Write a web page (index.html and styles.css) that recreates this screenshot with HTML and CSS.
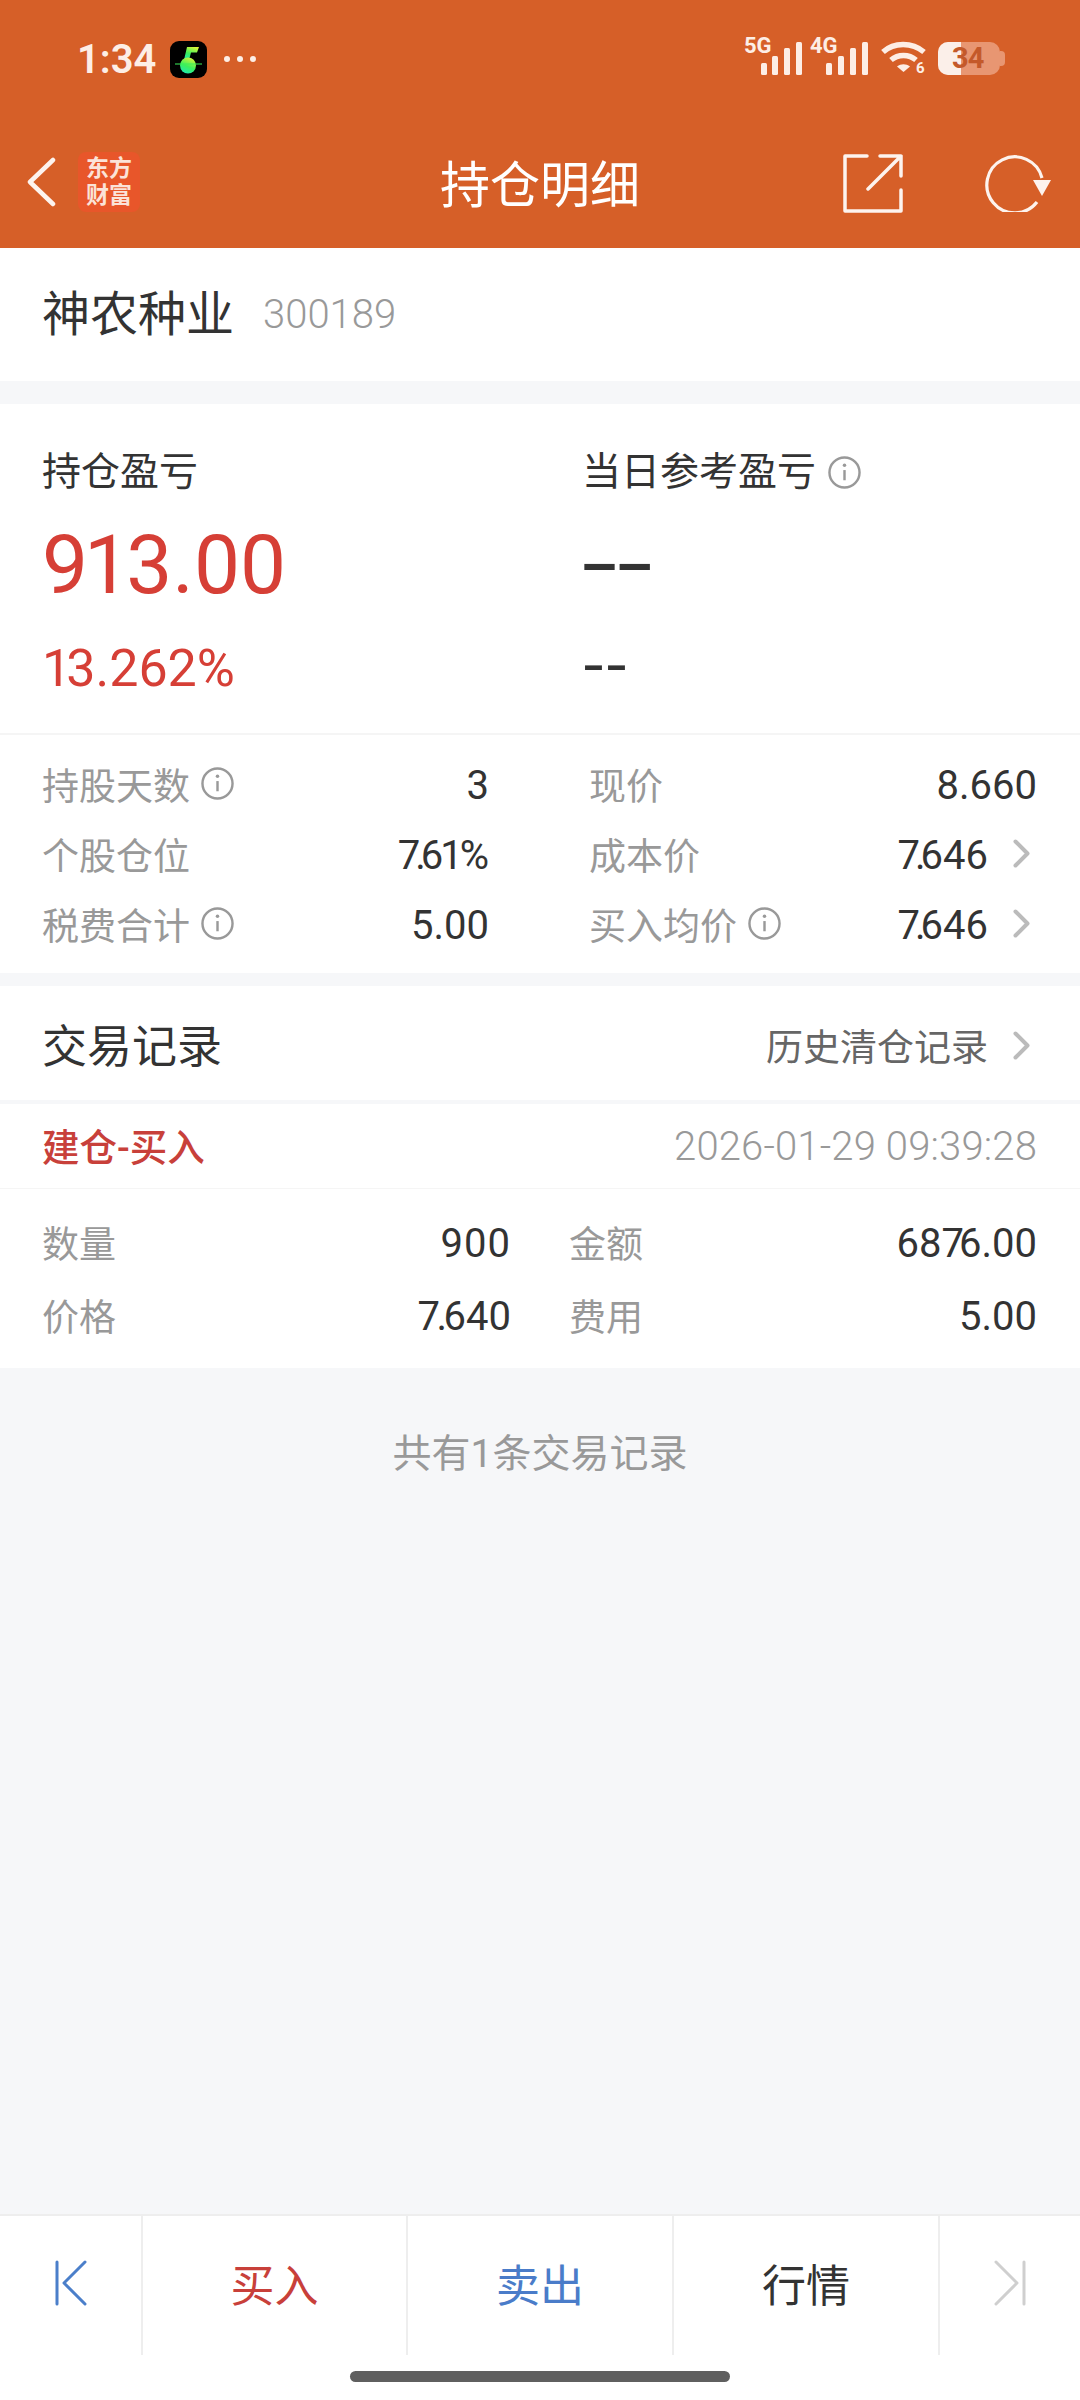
FILE: index.html
```html
<!DOCTYPE html>
<html lang="zh-CN">
<head>
<meta charset="utf-8">
<title>持仓明细</title>
<link rel="stylesheet" href="styles.css">
</head>
<body>
<div class="page">
  <header class="header">
    <div class="status">
      <div class="status-left">
        <span class="time">1:34</span>
        <svg class="app-icon" viewBox="0 0 37 37">
          <defs><linearGradient id="note" x1="0.7" y1="0" x2="0.3" y2="1"><stop offset="0" stop-color="#d8f53a"/><stop offset="0.55" stop-color="#3df05a"/><stop offset="1" stop-color="#1fe8b0"/></linearGradient></defs>
          <rect width="37" height="37" rx="9" fill="#000"/>
          <path d="M17 6h12l-2 5.500h-6l-2 7.500h-5z" fill="url(#note)"/>
          <circle cx="18" cy="24.500" r="8" fill="url(#note)"/>
          <path d="M5 23h27" stroke="#3df05a" stroke-width="1"/>
        </svg>
        <span class="dots"><i></i><i></i><i></i></span>
      </div>
      <div class="status-right">
        <svg class="signal" viewBox="0 0 58 38">
          <text x="-1" y="16" class="net">5G</text>
          <rect x="16" y="26" width="6" height="12" rx="1.500"/><rect x="27" y="19" width="6" height="19" rx="1.500"/><rect x="39" y="11" width="6" height="27" rx="1.500"/><rect x="51" y="5" width="6" height="33" rx="1.500"/>
        </svg>
        <svg class="signal" viewBox="0 0 58 38">
          <text x="-1" y="16" class="net">4G</text>
          <rect x="15" y="26" width="6" height="12" rx="1.500"/><rect x="27" y="19" width="6" height="19" rx="1.500"/><rect x="39" y="11" width="6" height="27" rx="1.500"/><rect x="51" y="5" width="6" height="33" rx="1.500"/>
        </svg>
        <svg class="wifi" viewBox="0 0 46 36">
          <path d="M2 13C13 3 31 3 43 13" fill="none" stroke="#fdeee6" stroke-width="5.500"/>
          <path d="M10 21C17 15 28 15 35 21" fill="none" stroke="#fdeee6" stroke-width="5.500"/>
          <path d="M16 27.500C20 24.500 25 24.500 29 27.500L22.500 33z" fill="#fdeee6"/>
          <text x="35" y="34" class="wifi-six">6</text>
        </svg>
        <div class="battery">
          <span class="battery-fill"></span>
          <span class="battery-text">34</span>
        </div>
        <span class="battery-nub"></span>
      </div>
    </div>
    <nav class="nav">
      <div class="nav-left">
        <svg class="back" viewBox="0 0 30 50"><path d="M27 3L4 25l23 22" fill="none" stroke="#fdf3ee" stroke-width="4.500" stroke-linecap="round" stroke-linejoin="round"/></svg>
        <div class="logo"><span>东方</span><span>财富</span></div>
      </div>
      <h1 class="title">持仓明细</h1>
      <div class="nav-right">
        <svg class="share" viewBox="0 0 60 60"><path d="M24 2H2v55h56V36M58 22V2H37M58 2L25 35" fill="none" stroke="#fdf3ee" stroke-width="3.500" stroke-linecap="round" stroke-linejoin="round"/></svg>
        <svg class="refresh" viewBox="0 0 68 60"><path d="M53 50A28 28 0 1 1 58 26" fill="none" stroke="#fdf3ee" stroke-width="3.200"/><path d="M49 28H67L58 44z" fill="#fdf3ee"/></svg>
      </div>
    </nav>
  </header>

  <section class="stock-row">
    <span class="stock-name">神农种业</span>
    <span class="stock-code">300189</span>
  </section>

  <section class="summary">
    <div class="summary-col summary-left">
      <div class="summary-label">持仓盈亏</div>
      <div class="summary-value red"><span class="tight-big">91</span>3.00</div>
      <div class="summary-pct red pct-left"><span class="tight-mid">1</span>3.262%</div>
    </div>
    <div class="summary-col">
      <div class="summary-label">当日参考盈亏<svg class="info info-top" viewBox="0 0 34 34"><circle cx="17" cy="17" r="15.500"/><path d="M17 14.500V25"/><circle class="dot" cx="17" cy="9.500" r="1.800"/></svg></div>
      <div class="summary-value dash-big">--</div>
      <div class="summary-pct dash-small">--</div>
    </div>
  </section>

  <section class="stats">
    <div class="stat stat-left"><span class="label">持股天数</span><svg class="info" viewBox="0 0 34 34"><circle cx="17" cy="17" r="15.500"/><path d="M17 14.500V25"/><circle class="dot" cx="17" cy="9.500" r="1.800"/></svg><span class="value">3</span></div>
    <div class="stat stat-right"><span class="label">现价</span><span class="value">8.660</span></div>
    <div class="stat stat-left"><span class="label">个股仓位</span><span class="value"><span class="k7">7.</span><span class="k1">61</span>%</span></div>
    <div class="stat stat-right"><span class="label">成本价</span><span class="value"><span class="k7">7.</span>646</span><svg class="chev" viewBox="0 0 17 29"><path d="M2.500 2.500L14.500 14.500L2.500 26.500"/></svg></div>
    <div class="stat stat-left"><span class="label">税费合计</span><svg class="info" viewBox="0 0 34 34"><circle cx="17" cy="17" r="15.500"/><path d="M17 14.500V25"/><circle class="dot" cx="17" cy="9.500" r="1.800"/></svg><span class="value">5.00</span></div>
    <div class="stat stat-right"><span class="label">买入均价</span><svg class="info" viewBox="0 0 34 34"><circle cx="17" cy="17" r="15.500"/><path d="M17 14.500V25"/><circle class="dot" cx="17" cy="9.500" r="1.800"/></svg><span class="value"><span class="k7">7.</span>646</span><svg class="chev" viewBox="0 0 17 29"><path d="M2.500 2.500L14.500 14.500L2.500 26.500"/></svg></div>
  </section>

  <section class="records-head">
    <span class="records-title">交易记录</span>
    <span class="history">历史清仓记录</span>
    <svg class="chev chev-head" viewBox="0 0 17 29"><path d="M2.500 2.500L14.500 14.500L2.500 26.500"/></svg>
  </section>

  <section class="trade">
    <div class="trade-head">
      <span class="trade-type">建仓-买入</span>
      <span class="trade-time">2026-01-29 09:39:28</span>
    </div>
    <div class="trade-grid">
      <div class="cell cell-left"><span class="label">数量</span><span class="value wide">900</span></div>
      <div class="cell cell-right"><span class="label">金额</span><span class="value">68<span class="k76">7</span>6.00</span></div>
      <div class="cell cell-left"><span class="label">价格</span><span class="value"><span class="k7b">7.</span>640</span></div>
      <div class="cell cell-right"><span class="label">费用</span><span class="value">5.00</span></div>
    </div>
  </section>

  <main class="rest">共有1条交易记录</main>

  <footer class="toolbar">
    <div class="tool tool-edge"><svg class="step" viewBox="0 0 32 46"><path d="M2 2v42M30 2L9 23l21 21" fill="none" stroke="#4b7fca" stroke-width="3" stroke-linecap="round" stroke-linejoin="round"/></svg></div>
    <div class="tool tool-buy red-btn">买入</div>
    <div class="tool tool-mid blue-btn">卖出</div>
    <div class="tool tool-mid dark-btn">行情</div>
    <div class="tool tool-end"><svg class="step" viewBox="0 0 32 46"><path d="M30 2v42M2 2l21 21L2 44" fill="none" stroke="#cfcfcf" stroke-width="3" stroke-linecap="round" stroke-linejoin="round"/></svg></div>
  </footer>
  <div class="home"><span class="home-bar"></span></div>
</div>
</body>
</html>
```
FILE: styles.css
```css
* { box-sizing: border-box; }
html, body { margin: 0; padding: 0; }
body {
  width: 1080px;
  height: 2400px;
  overflow: hidden;
  font-family: Roboto, "Noto Sans CJK SC", sans-serif;
  color: #333;
  background: #f6f7f9;
}
.page { width: 1080px; height: 2400px; display: flex; flex-direction: column; }
.red { color: #d63f36; }

/* header */
.header { height: 248px; background: #d65f28; color: #fff; flex: none; }
.status { height: 116px; display: flex; justify-content: space-between; align-items: flex-start; padding: 41px 75px 0 77px; }
.status-left { display: flex; align-items: center; height: 37px; }
.time { font-size: 40px; font-weight: 600; color: #fdeee6; line-height: 37px; width: 93px; }
.app-icon { width: 37px; height: 37px; }
.dots { display: flex; gap: 7px; margin-left: 17px; margin-top: -2px; }
.dots i { display: block; width: 6px; height: 6px; border-radius: 50%; background: #fdeee6; }
.status-right { display: flex; align-items: flex-start; margin-top: -4px; }
.signal { width: 58px; height: 38px; margin-right: 8px; fill: #fdeee6; overflow: visible; }
.net { font-size: 22px; font-weight: 700; font-family: Roboto, sans-serif; }
.wifi { width: 46px; height: 36px; margin: 2px 11px 0 4px; fill: #fdeee6; overflow: visible; }
.wifi-six { font-size: 15px; font-weight: 700; font-family: Roboto, sans-serif; }
.battery { position: relative; width: 62px; height: 33px; margin-top: 5px; border-radius: 10px; background: #e89672; }
.battery-fill { position: absolute; left: 0; top: 0; bottom: 0; width: 23px; border-radius: 10px 0 0 10px; background: #fbefe9; }
.battery-text { position: absolute; left: 14px; top: 0; line-height: 33px; font-size: 29px; font-weight: 700; letter-spacing: -1px; color: #c4592a; }
.battery-nub { width: 5px; height: 15px; margin-top: 14px; background: #e89672; border-radius: 0 4px 4px 0; }

.nav { height: 132px; position: relative; display: flex; align-items: center; justify-content: space-between; padding: 0 26px 0 26px; }
.nav-left { display: flex; align-items: center; }
.back { width: 30px; height: 50px; }
.logo { width: 62px; height: 60px; margin-left: 22px; border-radius: 8px; background: #e8562a; display: flex; flex-direction: column; align-items: center; justify-content: center; font-size: 23px; line-height: 27px; font-weight: 700; color: #fbe3d8; }
.logo span { display: block; }
.title { position: absolute; left: 0; right: 0; top: 35px; margin: 0; text-align: center; font-size: 50px; line-height: 70px; font-weight: 400; color: #fff; }
.nav-right { display: flex; align-items: center; gap: 81px; }
.share { width: 60px; height: 60px; margin-top: 3px; }
.refresh { width: 68px; height: 60px; margin: -1px 2px 0 0; }

/* stock */
.stock-row { height: 133px; background: #fff; display: flex; align-items: center; padding: 0 42px; flex: none; }
.stock-name { font-size: 48px; line-height: 66px; color: #333; }
.stock-code { font-size: 40px; line-height: 66px; margin-left: 29px; color: #999; font-weight: 300; }

/* summary */
.summary { margin-top: 23px; height: 331px; background: #fff; display: flex; padding: 40px 0 0 42px; border-bottom: 2px solid #f5f5f5; flex: none; }
.summary-col { flex: 1; }
.summary-left { flex: none; width: 540px; }
.summary-label { display: flex; align-items: center; font-size: 39px; line-height: 56px; height: 56px; color: #333; }
.summary-value { font-size: 82px; height: 92px; line-height: 92px; margin-top: 19px; }
.summary-pct { font-size: 52px; height: 70px; line-height: 70px; margin-top: 21px; }
.pct-left { margin-top: 23px; }
.tight-big { letter-spacing: -4px; }
.tight-mid { letter-spacing: -5px; }
.dash-big { width: fit-content; color: #333; font-family: Roboto, sans-serif; transform: scaleX(1.55); transform-origin: left center; margin-top: 18px; }
.dash-small { color: #333; font-family: "Noto Sans CJK SC", sans-serif; font-size: 66px; margin-top: 12px; }

/* info & chevron */
.info { width: 33px; height: 33px; margin-left: 11px; flex: none; fill: none; stroke: #999; stroke-width: 2.500; }
.info-top { margin-left: 12px; }
.info .dot { fill: #999; stroke: none; }
.chev { width: 17px; height: 29px; flex: none; margin: 0 7px 0 25px; fill: none; stroke: #bbb; stroke-width: 4; stroke-linecap: round; stroke-linejoin: round; }
.chev-head { margin-top: 5px; }

/* stats */
.stats { height: 238px; padding: 16px 0 0; background: #fff; display: grid; grid-template-columns: 589px 491px; grid-auto-rows: 65px; row-gap: 5px; align-content: start; flex: none; }
.stat { display: flex; align-items: center; }
.stat-left { padding: 0 100px 0 42px; }
.stat-right { padding-right: 43px; }
.label { color: #999; font-size: 37px; }
.value { margin-left: auto; padding-top: 3px; color: #333; font-size: 40px; }
.wide { letter-spacing: 1px; }
.k7 { letter-spacing: -5px; }
.k7b { letter-spacing: -3.500px; }
.k1 { letter-spacing: -3px; }
.k76 { letter-spacing: -5px; }

/* records */
.records-head { margin-top: 13px; height: 114px; background: #fff; display: flex; align-items: center; padding: 0 43px 0 42px; flex: none; }
.records-title { font-size: 45px; color: #333; margin-right: auto; }
.history { font-size: 37px; color: #666; padding-top: 4px; }
.trade { margin-top: 4px; background: #fff; flex: none; }
.trade-head { height: 85px; border-bottom: 1px solid #f5f5f5; display: flex; align-items: center; justify-content: space-between; padding: 0 43px 0 42px; }
.trade-type { font-size: 37.500px; color: #c8403a; font-weight: 500; padding-bottom: 3px; }
.trade-time { font-size: 40px; color: #999; font-weight: 300; letter-spacing: 0.150px; }
.trade-grid { height: 179px; padding: 16px 43px 0 42px; display: grid; grid-template-columns: 469px 468px; grid-auto-rows: 73px; column-gap: 58px; }
.cell { display: flex; align-items: center; }
.cell-left { width: 469px; }
.cell-right { width: 468px; }

.rest { flex: 1; padding-top: 60px; text-align: center; font-size: 39px; line-height: 52px; color: #999; }

/* toolbar */
.toolbar { height: 141px; background: #fff; border-top: 2px solid #eee; display: flex; flex: none; }
.tool { display: flex; align-items: center; justify-content: center; font-size: 44px; padding-bottom: 6px; border-left: 2px solid #eee; }
.tool-edge { width: 141px; border-left: 0; }
.tool-buy { width: 265px; }
.tool-mid { width: 266px; }
.tool-end { flex: 1; }
.step { width: 32px; height: 46px; }
.red-btn { color: #c8403a; }
.blue-btn { color: #4a7cc9; }
.dark-btn { color: #333; }
.home { height: 45px; background: #fff; display: flex; justify-content: center; padding-top: 16px; flex: none; }
.home-bar { display: block; width: 380px; height: 11px; border-radius: 6px; background: #5f5f5f; }
```
